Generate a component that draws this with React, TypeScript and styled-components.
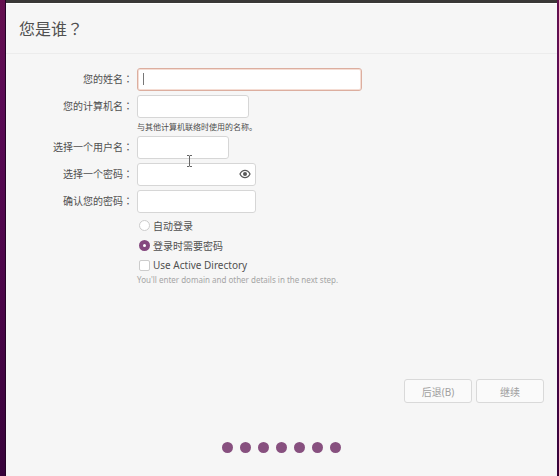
import React, { useState } from 'react';
import styled, { createGlobalStyle } from 'styled-components';

const GlobalStyle = createGlobalStyle`
  *, *::before, *::after { box-sizing: border-box; }
  body {
    margin: 0;
    font-family: "Noto Sans", "Noto Sans CJK SC", sans-serif;
    font-size: 10px;
    color: #505050;
  }
`;

const Desktop = styled.div`
  display: flex;
  min-height: 100vh;
  padding: 0 2px 0 6px;
  background: linear-gradient(#65104f 0, #5a0a55 100px, #4a0548 300px, #38033b 100%);
`;

const Installer = styled.main`
  display: flex;
  flex: 1;
  flex-direction: column;
  border-top: 3px solid #3a3837;
  background: #f6f6f6;
  box-shadow: -1px 0 0 #240326;
`;

const Header = styled.header`
  height: 51px;
  padding: 0 13px;
  border-top: 1px solid #ffffff;
  border-bottom: 1px solid #ececec;
`;

const Title = styled.h1`
  margin: 0;
  font-size: 16px;
  font-weight: 400;
  line-height: 50px;
`;

const Punctuation = styled.span`
  font-family: "Noto Sans CJK TC", sans-serif;
  line-height: 1;
`;

const Form = styled.form`
  display: flex;
  flex: 1;
  flex-direction: column;
`;

const Fields = styled.div`
  display: grid;
  grid-template-columns: 127px minmax(0, 1fr);
  column-gap: 4px;
  row-gap: 4px;
  padding: 14px 14px 0 0;
`;

const Label = styled.label`
  height: 23px;
  line-height: 22px;
  text-align: right;
  white-space: nowrap;
`;

const Control = styled.div<{ $width: number }>`
  position: relative;
  width: ${({ $width }) => $width}px;
  max-width: 100%;
  height: 23px;
`;

const TextBox = styled.input`
  display: block;
  width: 100%;
  height: 100%;
  padding: 0 5px;
  border: 1px solid #d6d6d6;
  border-radius: 3px;
  outline: none;
  background: #ffffff;
  color: #4c4c4c;
  font: inherit;

  &:focus {
    border-color: #dcae9f;
    box-shadow: inset 0 0 0 1px #f5ddd4;
  }
`;

const Caret = styled.span`
  position: absolute;
  top: 5px;
  left: 6px;
  width: 1px;
  height: 12px;
  background: #777777;
`;

const Reveal = styled.button`
  position: absolute;
  top: 5px;
  right: 5px;
  display: flex;
  padding: 0;
  border: 0;
  background: none;
  color: #585858;
`;

const Pointer = styled.svg`
  position: absolute;
  top: 19px;
  left: 49px;
  z-index: 1;
  pointer-events: none;
`;

const Note = styled.p<{ $muted?: boolean }>`
  grid-column: 2;
  margin: 0;
  color: ${({ $muted }) => ($muted ? '#a5a5a5' : '#4c4c4c')};
  font-size: 8px;
  line-height: 10px;
`;

const Options = styled.div`
  display: flex;
  flex-direction: column;
  align-items: flex-start;
  padding: 2px 14px 0 131px;
`;

const Option = styled.label`
  display: flex;
  align-items: center;
  gap: 3px;
  height: 20px;
  padding-left: 2px;
  white-space: nowrap;
`;

const Toggle = styled.input`
  appearance: none;
  width: 11px;
  height: 11px;
  margin: 0;
  border: 1px solid #cccccc;
  border-radius: ${({ type }) => (type === 'radio' ? '50%' : '2px')};
  background: #ffffff;

  &[type='radio']:checked {
    border: 4px solid #85497f;
  }

  &[type='checkbox']:checked {
    background: #85497f;
    box-shadow: inset 0 0 0 2px #ffffff;
  }
`;

const Actions = styled.div`
  display: flex;
  justify-content: flex-end;
  gap: 4px;
  margin-top: auto;
  padding: 0 13px;
`;

const Action = styled.button`
  width: 68px;
  height: 24px;
  padding: 0;
  border: 1px solid #d9d9d9;
  border-radius: 3px;
  background: #fafafa;
  color: #a0a0a0;
  font: inherit;
`;

const Progress = styled.div`
  display: flex;
  justify-content: center;
  gap: 7px;
  padding: 39px 0 23px;
`;

const Dot = styled.span`
  width: 11px;
  height: 11px;
  border-radius: 50%;
  background: #87507f;
`;

const Colon = () => <Punctuation lang="zh-TW">：</Punctuation>;

export default function App() {
  const [autoLogin, setAutoLogin] = useState(false);
  const [visible, setVisible] = useState(false);
  const [nameFocused, setNameFocused] = useState(true);

  return (
    <Desktop lang="zh-CN">
      <GlobalStyle />
      <Installer>
        <Header>
          <Title>您是谁<Punctuation lang="zh-TW">？</Punctuation></Title>
        </Header>
        <Form onSubmit={(event) => event.preventDefault()}>
          <Fields>
            <Label htmlFor="name">您的姓名<Colon /></Label>
            <Control $width={225}>
              <TextBox
                id="name"
                autoFocus
                style={{ caretColor: nameFocused ? 'transparent' : 'auto' }}
                onFocus={() => setNameFocused(true)}
                onBlur={() => setNameFocused(false)}
                onInput={() => setNameFocused(false)}
              />
              {nameFocused && <Caret />}
            </Control>

            <Label htmlFor="host">您的计算机名<Colon /></Label>
            <Control $width={112}><TextBox id="host" /></Control>
            <Note>与其他计算机联络时使用的名称。</Note>

            <Label htmlFor="user">选择一个用户名<Colon /></Label>
            <Control $width={92}>
              <TextBox id="user" />
              <Pointer width="7" height="12" viewBox="0 0 7 12" fill="none" aria-hidden="true">
                <path d="M1 .5h2l.5.5.5-.5h2M3.500 1v10M1 11.500h2l.5-.5.5.5h2" stroke="#666" />
              </Pointer>
            </Control>

            <Label htmlFor="password">选择一个密码<Colon /></Label>
            <Control $width={119}>
              <TextBox id="password" type={visible ? 'text' : 'password'} />
              <Reveal type="button" aria-label="显示密码" onClick={() => setVisible(!visible)}>
                <svg width="12" height="12" viewBox="0 0 12 12" fill="none">
                  <path d="M1 6C2.3 3.4 4 2.4 6 2.4S9.700 3.400 11 6C9.700 8.600 8 9.600 6 9.600S2.300 8.600 1 6Z" stroke="currentColor" strokeWidth="1.300" />
                  <circle cx="6" cy="6" r="2" fill="currentColor" />
                </svg>
              </Reveal>
            </Control>

            <Label htmlFor="confirm">确认您的密码<Colon /></Label>
            <Control $width={119}><TextBox id="confirm" type="password" /></Control>
          </Fields>
          <Options>
            <Option>
              <Toggle type="radio" name="login" checked={autoLogin} onChange={() => setAutoLogin(true)} />
              自动登录
            </Option>
            <Option>
              <Toggle type="radio" name="login" checked={!autoLogin} onChange={() => setAutoLogin(false)} />
              登录时需要密码
            </Option>
            <Option>
              <Toggle type="checkbox" />
              Use Active Directory
            </Option>
            <Note $muted>You'll enter domain and other details in the next step.</Note>
          </Options>
          <Actions>
            <Action type="button">后退(B)</Action>
            <Action type="submit">继续</Action>
          </Actions>
        </Form>
        <Progress aria-hidden="true">
          {Array.from({ length: 7 }, (_, step) => <Dot key={step} />)}
        </Progress>
      </Installer>
    </Desktop>
  );
}
